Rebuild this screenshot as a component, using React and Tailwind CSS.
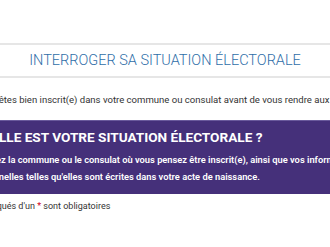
import React from 'react';

export default function App() {
  return (
    <div className="w-[330px] h-[247px] overflow-hidden bg-white" style={{ fontFamily: 'Roboto, "Liberation Sans", sans-serif' }}>
      <div className="h-[43px]" />
      {/* Titre de la page */}
      <div className="h-[35px] border-y-2 border-[#e6e6e6] flex items-center justify-center">
        <h1 className="text-[14.5px] font-light text-[#2f6ea8] whitespace-nowrap">
          INTERROGER SA SITUATION ÉLECTORALE
        </h1>
      </div>

      <div className="ml-[-80px] w-[520px]">
        <p className="mt-[15px] ml-[4px] text-[9.55px] text-[#333] whitespace-nowrap">
          Vérifiez que vous êtes bien inscrit(e) dans votre commune ou consulat avant de vous rendre aux urnes.
        </p>

        {/* Bandeau violet */}
        <div className="mt-[13px] bg-[#45307a] border-t border-[#6a5a9c] pt-[7px] pb-[9px] pl-[53px]">
          <h2 className="text-[13.6px] leading-[18px] font-bold text-white whitespace-nowrap">
            QUELLE EST VOTRE SITUATION ÉLECTORALE ?
          </h2>
          <p className="mt-[5px] -ml-[3px] text-[9.3px] font-semibold text-white leading-[17px]">
            <span className="block whitespace-nowrap">Indiquez la commune ou le consulat où vous pensez être inscrit(e), ainsi que vos informations</span>
            <span className="block whitespace-nowrap">personnelles telles qu'elles sont écrites dans votre acte de naissance.</span>
          </p>
        </div>

        <p className="mt-[6px] ml-[10px] text-[9px] text-[#333] whitespace-nowrap">
          Les champs marqués d'un <span className="text-[#d0021b]">*</span> sont obligatoires
        </p>
      </div>
    </div>
  );
}
